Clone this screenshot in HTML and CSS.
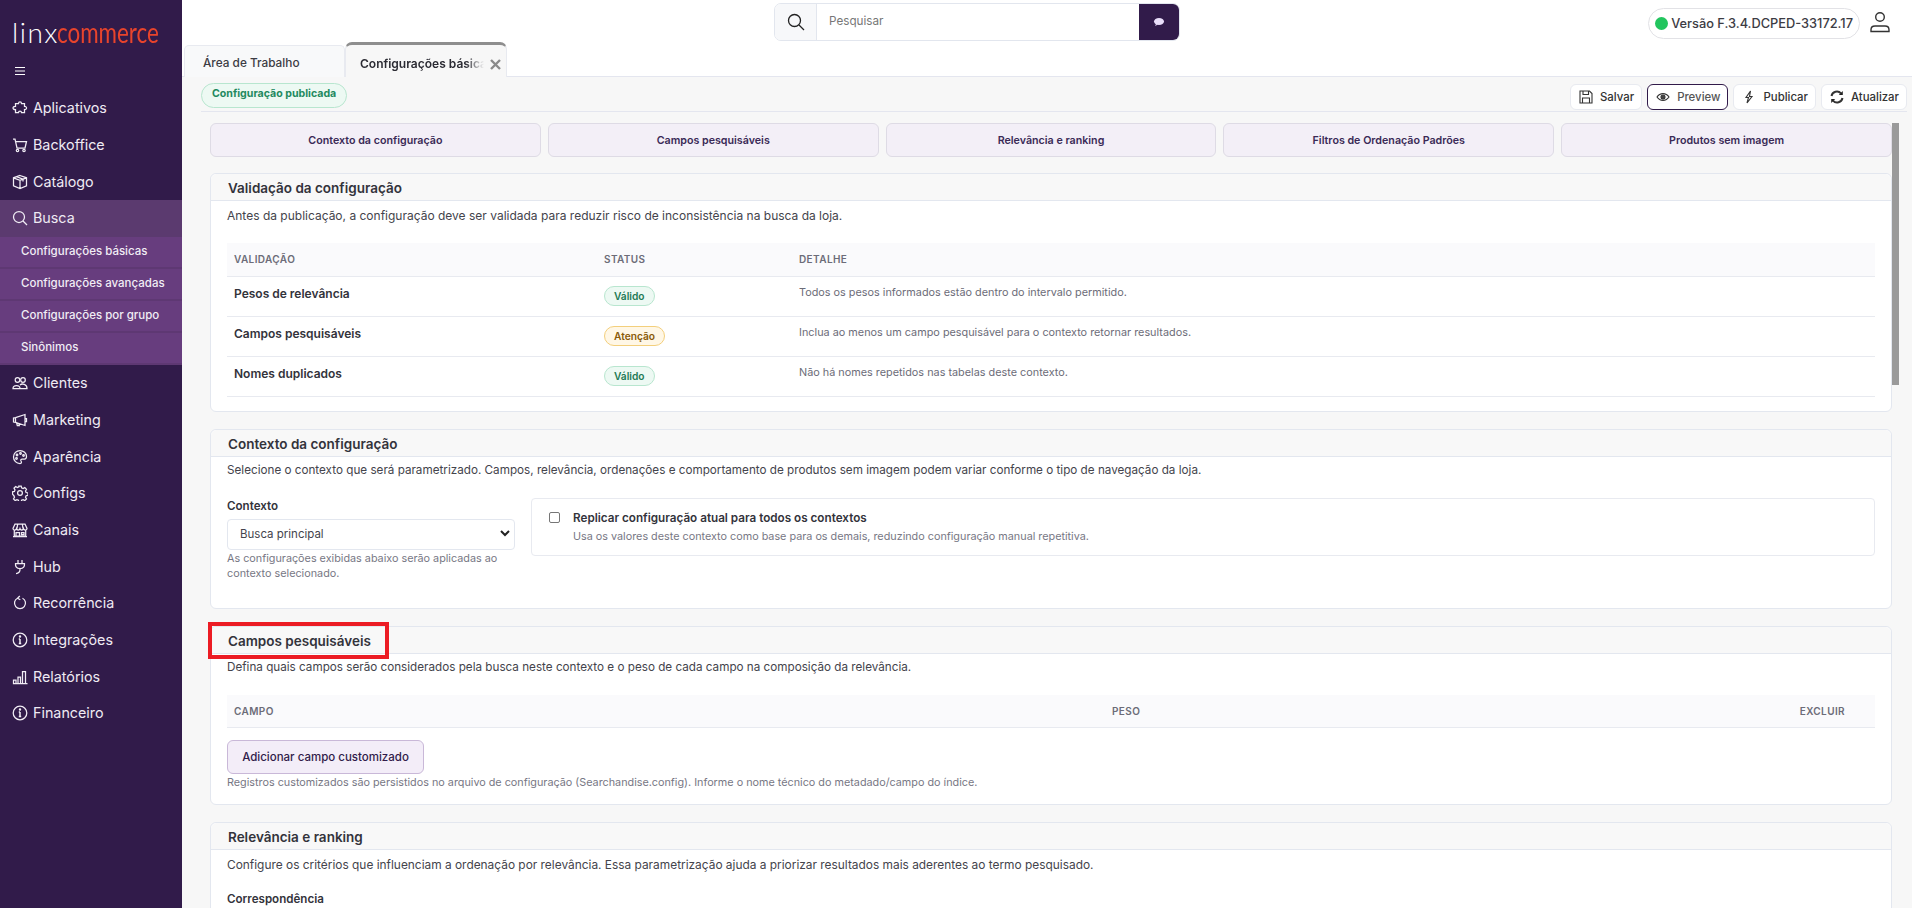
FILE: index.html
```html
<!DOCTYPE html>
<html lang="pt-BR">
<head>
<meta charset="utf-8">
<title>Linx Commerce</title>
<link rel="stylesheet" href="styles.css">
</head>
<body>
<div class="app">
  <aside class="sidebar">
    <div class="logo"><span class="logo-linx">linx</span><span class="logo-commerce">commerce</span></div>
    <div class="burger"><svg width="12" height="10" viewBox="0 0 12 10"><path d="M1 1.500h10M1 5h10M1 8.500h10" stroke="#fff" stroke-width="1.200" fill="none"/></svg></div>
    <nav>
      <a class="nav-item"><svg class="ico" viewBox="0 0 16 16"><path d="M3.500 3.500h3c0-2.300 3-2.300 3 0h3v3c2.700-.3 2.700 3.300 0 3v3h-3c0-2-3-2-3 0h-3v-3c-3.300.3-3.300-3.300 0-3z"/></svg>Aplicativos</a>
      <a class="nav-item"><svg class="ico" viewBox="0 0 16 16"><path d="M1 2h2l2 9h8l1.500-6.500H3.600"/><circle cx="5.500" cy="13.500" r="1.200"/><circle cx="12" cy="13.500" r="1.200"/></svg>Backoffice</a>
      <a class="nav-item"><svg class="ico" viewBox="0 0 16 16"><path d="M8 1.500l6.500 2.300v8L8 14.500l-6.500-2.700v-8zM1.500 3.800L8 6.300l6.500-2.500M8 6.300v8.200M4.500 2.700l6.500 2.400v2.500"/></svg>Catálogo</a>
      <a class="nav-item is-open"><svg class="ico" viewBox="0 0 16 16"><circle cx="7" cy="7" r="5.500"/><path d="M11 11l4 4"/></svg>Busca</a>
      <a class="sub-item">Configurações básicas</a>
      <a class="sub-item">Configurações avançadas</a>
      <a class="sub-item">Configurações por grupo</a>
      <a class="sub-item">Sinônimos</a>
      <a class="nav-item after-sub"><svg class="ico" viewBox="0 0 16 16"><circle cx="5.500" cy="5" r="2.300"/><circle cx="11" cy="5" r="2.300"/><path d="M1 13.500c0-4 7-4 7 0zM8 10c2-1.800 7-1.200 7 3.500H8"/></svg>Clientes</a>
      <a class="nav-item"><svg class="ico" viewBox="0 0 16 16"><path d="M1.500 6v4l2 .300L13 13.500v-11L3.500 5.700zM3.500 5.700v4.600M4.500 10.500l.8 3h2l-.6-2.300M13 6.500h1.500v3H13"/></svg>Marketing</a>
      <a class="nav-item"><svg class="ico" viewBox="0 0 16 16"><path d="M8 1.500a6.500 6.500 0 1 0 0 13c2 0 1.500-1.800 1-2.500-.6-1 0-2 1.200-2h2.300c1.500 0 2-1.200 2-2.500 0-3.500-2.900-6-6.500-6z"/><circle cx="5" cy="6" r=".8"/><circle cx="8.500" cy="4.500" r=".8"/><circle cx="4.500" cy="9.500" r=".8"/><circle cx="11.500" cy="6.500" r=".8"/></svg>Aparência</a>
      <a class="nav-item"><svg class="ico" viewBox="0 0 16 16"><circle cx="8" cy="8" r="2.400"/><path d="M6.800 1h2.400l.4 1.900 1.500.7 1.700-1 1.700 1.700-1 1.700.6 1.500 1.900.4v2.400l-1.900.4-.6 1.500 1 1.700-1.700 1.700-1.700-1-1.500.6-.4 1.900H6.800l-.4-1.900-1.500-.6-1.700 1-1.700-1.700 1-1.700-.6-1.500L.5 9.200V6.800l1.900-.4.600-1.500-1-1.700 1.700-1.700 1.700 1 1.500-.6z"/></svg>Configs</a>
      <a class="nav-item"><svg class="ico" viewBox="0 0 16 16"><path d="M3 2h10l2 4.500c0 2-3 2-3.500.3-.5 1.700-3 1.700-3.500 0-.5 1.700-3 1.700-3.500 0C4 8.500 1 8.500 1 6.500zM2.300 8.500V14h11.400V8.500M1 14.500h14M4 14v-3.500h3.500V14M9.500 10.500H12v2H9.500zM5.700 2 5 6.500M10.300 2l.7 4.500"/></svg>Canais</a>
      <a class="nav-item"><svg class="ico" viewBox="0 0 16 16"><path d="M6 1v3.500M10 1v3.500M3.500 4.500h9c.3 3-1 5-4.500 5.200-3.500-.2-4.800-2.200-4.500-5.200zM8 9.700c.3 3-1.500 4.800-4 4.800"/></svg>Hub</a>
      <a class="nav-item"><svg class="ico" viewBox="0 0 16 16"><path d="M5.500 3.200a5.500 5.500 0 1 0 5 0M5.500 3.200L7.800 1M5.500 3.200l2.800 1.600"/></svg>Recorrência</a>
      <a class="nav-item"><svg class="ico" viewBox="0 0 16 16"><circle cx="8" cy="8" r="6.800"/><path d="M8 7v4.500M6.800 7H8M6.800 11.500h2.400" stroke-width="1.500"/><circle cx="8" cy="4.500" r=".6"/></svg>Integrações</a>
      <a class="nav-item"><svg class="ico" viewBox="0 0 16 16"><path d="M1 14.500h14.500M1.500 11h2.500v3.500H1.500zM6 8h2.500v6.500H6zM10.500 2.500h3v12h-3z"/></svg>Relatórios</a>
      <a class="nav-item"><svg class="ico" viewBox="0 0 16 16"><circle cx="8" cy="8" r="6.800"/><path d="M8 7v4.500M6.800 7H8M6.800 11.500h2.400" stroke-width="1.500"/><circle cx="8" cy="4.500" r=".6"/></svg>Financeiro</a>
    </nav>
  </aside>

  <div class="main">
    <header class="topbar">
      <div class="search">
        <span class="search-icon"><svg width="18" height="18" viewBox="0 0 18 18" fill="none" stroke="#222" stroke-width="1.300"><circle cx="7.500" cy="7.500" r="6"/><path d="M12 12l5 5"/></svg></span>
        <span class="search-input">Pesquisar</span>
        <span class="search-btn"><svg width="12" height="10" viewBox="0 0 12 10"><ellipse cx="6" cy="4.500" rx="5" ry="3.500" fill="#e9defa"/><path d="M3 7l-1 2 3-1.500z" fill="#e9defa"/></svg></span>
      </div>
      <div class="version"><span class="dot"></span>Versão F.3.4.DCPED-33172.17</div>
      <svg class="user" width="20" height="22" viewBox="0 0 20 22" fill="none" stroke="#333" stroke-width="1.400"><circle cx="10" cy="6" r="4.300"/><path d="M1 20.500v-1.800c0-2 1.500-3.700 4-3.700h10c2.500 0 4 1.700 4 3.700v1.800z"/></svg>
    </header>

    <div class="tabs">
      <div class="tab">Área de Trabalho</div>
      <div class="tab is-active"><span class="tab-label">Configurações básicas</span><svg class="tab-close" width="11" height="11" viewBox="0 0 11 11"><path d="M1 1l9 9M10 1l-9 9" stroke="#8a8a8a" stroke-width="2.400" fill="none"/></svg></div>
    </div>

    <div class="page">
      <div class="toolbar">
        <span class="status-pill">Configuração publicada</span>
        <div class="actions">
          <button class="act"><svg class="act-ico" viewBox="0 0 14 14"><path d="M1 1h9.500L13 3.500V13H1zM4 1v3.500h5.500V1M3.500 13V8h7v5"/></svg>Salvar</button>
          <button class="act act-preview"><svg class="act-ico" viewBox="0 0 14 14"><path d="M1 7c3-4.500 9-4.500 12 0-3 4.500-9 4.500-12 0z"/><circle cx="7" cy="7" r="2" fill="#444"/></svg>Preview</button>
          <button class="act"><svg class="act-ico" viewBox="0 0 14 14"><path d="M8.500 1L4 7.500h2.500L5 13l5-6.500H7.500z"/></svg>Publicar</button>
          <button class="act"><svg class="act-ico act-refresh" viewBox="0 0 14 14"><path d="M1.500 6A5.500 5.500 0 0 1 11 3.300M12.500 8A5.500 5.500 0 0 1 3 10.700"/><path class="solid" d="M12.800 1v4h-4zM1.200 13V9h4z"/></svg>Atualizar</button>
        </div>
      </div>

      <div class="scroll">
        <span class="thumb"></span>
        <div class="quick">
          <button class="quick-btn">Contexto da configuração</button>
          <button class="quick-btn">Campos pesquisáveis</button>
          <button class="quick-btn">Relevância e ranking</button>
          <button class="quick-btn">Filtros de Ordenação Padrões</button>
          <button class="quick-btn">Produtos sem imagem</button>
        </div>

        <section class="card card-val">
          <h2 class="card-head">Validação da configuração</h2>
          <div class="card-body">
            <p class="desc">Antes da publicação, a configuração deve ser validada para reduzir risco de inconsistência na busca da loja.</p>
            <table class="grid">
              <thead><tr><th class="c1">Validação</th><th class="c2">Status</th><th>Detalhe</th></tr></thead>
              <tbody>
                <tr><td class="name">Pesos de relevância</td><td><span class="pill ok">Válido</span></td><td class="detail">Todos os pesos informados estão dentro do intervalo permitido.</td></tr>
                <tr><td class="name">Campos pesquisáveis</td><td><span class="pill warn">Atenção</span></td><td class="detail">Inclua ao menos um campo pesquisável para o contexto retornar resultados.</td></tr>
                <tr><td class="name">Nomes duplicados</td><td><span class="pill ok">Válido</span></td><td class="detail">Não há nomes repetidos nas tabelas deste contexto.</td></tr>
              </tbody>
            </table>
          </div>
        </section>

        <section class="card card-ctx">
          <h2 class="card-head">Contexto da configuração</h2>
          <div class="card-body">
            <p class="desc">Selecione o contexto que será parametrizado. Campos, relevância, ordenações e comportamento de produtos sem imagem podem variar conforme o tipo de navegação da loja.</p>
            <div class="ctx-row">
              <div class="ctx-field">
                <label class="label">Contexto</label>
                <div class="select">Busca principal<svg width="10" height="7" viewBox="0 0 10 7" fill="none" stroke="#222" stroke-width="2"><path d="M1 1l4 4 4-4"/></svg></div>
                <p class="help">As configurações exibidas abaixo serão aplicadas ao contexto selecionado.</p>
              </div>
              <div class="ctx-box">
                <span class="check"></span>
                <div>
                  <div class="ctx-title">Replicar configuração atual para todos os contextos</div>
                  <div class="help">Usa os valores deste contexto como base para os demais, reduzindo configuração manual repetitiva.</div>
                </div>
              </div>
            </div>
          </div>
        </section>

        <section class="card card-fields">
          <h2 class="card-head">Campos pesquisáveis<span class="mark"></span></h2>
          <div class="card-body">
            <p class="desc">Defina quais campos serão considerados pela busca neste contexto e o peso de cada campo na composição da relevância.</p>
            <table class="grid grid-fields">
              <thead><tr><th class="f1">Campo</th><th>Peso</th><th class="f3">Excluir</th></tr></thead>
            </table>
            <button class="add">Adicionar campo customizado</button>
            <p class="help">Registros customizados são persistidos no arquivo de configuração (Searchandise.config). Informe o nome técnico do metadado/campo do índice.</p>
          </div>
        </section>

        <section class="card card-rel">
          <h2 class="card-head">Relevância e ranking</h2>
          <div class="card-body">
            <p class="desc">Configure os critérios que influenciam a ordenação por relevância. Essa parametrização ajuda a priorizar resultados mais aderentes ao termo pesquisado.</p>
            <div class="label label-corr">Correspondência</div>
          </div>
        </section>
      </div>
    </div>
  </div>
</div>
</body>
</html>
```
FILE: styles.css
```css
* { box-sizing: border-box; }
html, body { margin: 0; height: 100%; overflow: hidden; }
body { font-family: Inter, "Liberation Sans", sans-serif; color: #2b2b33; background: #fff; }
p, h2 { margin: 0; }
button { font-family: inherit; cursor: pointer; }

.app { display: flex; height: 908px; }

/* Sidebar */
.sidebar { width: 182px; flex: none; background: #311b4a; color: #f1edf5; }
.logo { display: flex; align-items: baseline; height: 62px; padding: 14px 0 0 12px; font-family: Lato, sans-serif; font-weight: 400; font-size: 28px; line-height: 36px; white-space: nowrap; }
.logo-linx { width: 45px; color: #fff; font-weight: 300; letter-spacing: 1.500px; }
.logo-commerce { display: inline-block; color: #e8442c; transform: scaleX(.8); transform-origin: left center; }
.burger { height: 18px; padding-left: 14px; display: flex; align-items: center; margin-bottom: 10px; }
.nav-item { display: flex; align-items: center; gap: 5px; height: 36.650px; padding-left: 12px; font-size: 14.300px; line-height: 20px; color: #efeaf3; }
.nav-item.is-open { background: #5b3a6f; }
.nav-item.after-sub { margin-top: .5px; }
.ico { width: 16px; height: 16px; flex: none; fill: none; stroke: #f1edf5; stroke-width: 1.250; }
.sub-item { display: flex; align-items: center; height: 32px; padding: 0 0 1px 21px; font-size: 11.500px; font-weight: 500; color: #f1edf5; background: #673d7e; border-bottom: 2px solid #5e3873; }

/* Top bar */
.main { flex: 1; min-width: 0; display: flex; flex-direction: column; }
.topbar { height: 45px; flex: none; display: flex; align-items: flex-start; padding: 3px 22px 0 592px; }
.search { display: flex; width: 406px; height: 38px; border: 1px solid #e2e6ee; border-radius: 7px; overflow: hidden; }
.search-icon { width: 42px; display: flex; align-items: center; justify-content: center; background: #f7f8fa; border-right: 1px solid #e2e6ee; }
.search-input { flex: 1; display: flex; align-items: center; padding-left: 12px; font-size: 11.700px; color: #777; padding-bottom: 2px; }
.search-btn { width: 40px; display: flex; align-items: center; justify-content: center; background: #311b4a; }
.version { display: flex; align-items: center; gap: 3px; height: 31px; margin: 5px 0 0 auto; padding: 0 6px 0 6px; border: 1px solid #e2e2e6; border-radius: 16px; font-size: 12.800px; font-weight: 500; color: #3c3c44; }
.dot { width: 13px; height: 13px; border-radius: 50%; background: #22c55e; }
.user { margin: 8px 0 0 10px; }

/* Tabs */
.tabs { display: flex; height: 32px; flex: none; padding-left: 2px; border-bottom: 1px solid #e4e6ef; background: #fff; }
.tab { width: 161px; height: 32px; padding: 10px 0 0 18px; background: #f8f9fa; border: 1px solid #e8eaf0; border-bottom: 0; border-radius: 5px 5px 0 0; font-size: 11.800px; font-weight: 500; color: #3c3c44; }
.tab.is-active { position: relative; display: flex; width: 162px; height: 35px; margin-top: -3px; padding: 11px 0 0 14px; background: #f7f7f7; border-top: 3px solid #8e8e8e; border-radius: 7px 7px 0 0; font-size: 12px; font-weight: 600; color: #2b2b33; }
.tab-label { display: block; width: 124px; overflow: hidden; white-space: nowrap; -webkit-mask-image: linear-gradient(90deg, #000 85%, transparent 100%); mask-image: linear-gradient(90deg, #000 85%, transparent 100%); }
.tab-close { position: absolute; right: 5px; top: 14px; }

/* Page */
.page { flex: 1; min-height: 0; display: flex; flex-direction: column; padding: 0 5px 0 19px; background: #f7f7f7; }
.toolbar { height: 35px; flex: none; display: flex; align-items: flex-start; justify-content: space-between; border-bottom: 1px solid #e4e6ef; padding-top: 6px; }
.status-pill { height: 25px; padding: 3px 10px 0; font-size: 10.600px; font-weight: 700; color: #1f8a5f; background: #edf9f3; border: 1px solid #b8e6cf; border-radius: 13px; }
.actions { display: flex; gap: 5px; margin-top: 1px; }
.act { display: flex; align-items: center; gap: 7px; height: 26px; padding: 0 7px 0 8px; background: #fff; border: 1px solid #e8eaf0; border-radius: 6px; font-size: 11.400px; font-weight: 500; color: #333; }
.act-preview { border-color: #311b4a; color: #555; }
.act-ico { width: 14px; height: 14px; fill: none; stroke: #333; stroke-width: 1.100; }
.act-refresh { stroke-width: 2; }
.act-refresh .solid { fill: #222; stroke: none; }

/* Scrolling area */
.scroll { position: relative; flex: 1; min-height: 0; overflow: hidden; padding: 11px 15px 0 9px; }
.thumb { position: absolute; right: 8px; top: 11px; width: 7px; height: 262px; background: #9a9a9a; }
.quick { display: grid; grid-template-columns: repeat(5, 1fr); gap: 7px; margin-bottom: 16px; }
.quick-btn { height: 34px; background: #f3eff7; border: 1px solid #dedbe5; border-radius: 6px; font-size: 10.700px; font-weight: 600; color: #3a2a56; }

.card { background: #fff; border: 1px solid #e3e7ef; border-radius: 6px; margin-bottom: 17px; }
.card-head { position: relative; height: 27px; padding: 1px 17px 0; background: #f8f8f8; border-bottom: 1px solid #e3e7ef; border-radius: 6px 6px 0 0; font-size: 13.500px; line-height: 26px; font-weight: 600; color: #33333b; }
.card-body { padding: 6px 16px 16px; }
.card-ctx .card-body, .card-fields .card-body { padding-top: 5px; }
.desc { font-size: 12px; line-height: 17px; color: #44444c; }
.card-ctx .desc, .card-fields .desc { font-size: 11.700px; }
.card-rel .desc { font-size: 11.900px; }
.card-val { height: 239px; }
.card-ctx { height: 180px; }
.card-fields { height: 179px; }

.grid { width: 100%; margin-top: 19px; border-collapse: collapse; table-layout: fixed; }
.grid th { height: 33px; padding: 0 7px; background: #fafafc; border-bottom: 1px solid #e8eaf0; text-align: left; font-size: 10px; font-weight: 600; letter-spacing: .4px; text-transform: uppercase; color: #6c6c78; }
.grid td { height: 40px; padding: 9px 7px 0; border-bottom: 1px solid #e8eaf0; vertical-align: top; }
.c1 { width: 370px; }
.c2 { width: 195px; }
.name { font-size: 12px; font-weight: 600; color: #33333b; }
.grid .detail { padding-top: 8px; font-size: 10.850px; color: #6c6c78; }
.pill { display: block; width: fit-content; height: 20px; padding: 0 9px; border-radius: 10px; border: 1px solid; font-size: 10.200px; line-height: 19px; font-weight: 600; }
.ok { color: #1f7a55; background: #edf9f3; border-color: #b8e6cf; }
.warn { color: #8a5a08; background: #fff7e6; border-color: #f3cf7c; }

.ctx-row { display: flex; gap: 16px; margin-top: 18px; }
.ctx-field { width: 288px; flex: none; padding-top: 1px; }
.label { display: block; font-size: 11.600px; font-weight: 600; line-height: 17px; color: #33333b; }
.select { display: flex; align-items: center; justify-content: space-between; height: 31px; margin-top: 4px; padding: 0 4px 2px 12px; border: 1px solid #e3e7ef; border-radius: 4px; font-size: 11.500px; color: #44444c; }
.help { font-size: 10.800px; line-height: 15px; color: #777784; margin-top: 2px; }
.select + .help { margin-top: 1px; }
.ctx-box { flex: 1; display: flex; gap: 13px; height: 58px; margin-top: 1px; padding: 11px 17px; border: 1px solid #e8eaf0; border-radius: 4px; }
.check { width: 11px; height: 11px; margin-top: 2px; flex: none; border: 1px solid #767676; border-radius: 2px; background: #fff; }
.ctx-title { font-size: 11.700px; font-weight: 600; line-height: 17px; color: #33333b; }

.mark { position: absolute; left: -3px; top: -5px; width: 181px; height: 37px; border: 4.500px solid #ec1c24; }
.grid-fields th { height: 32px; }
.f1 { width: 878px; }
.f3 { width: 105px; text-align: right !important; padding-right: 30px !important; }
.add { display: block; width: 197px; height: 34px; margin-top: 12px; background: #f3edf8; border: 1px solid #c9b8d8; border-radius: 6px; font-size: 11.500px; font-weight: 500; color: #311b4a; }
.add + .help { margin-top: 1px; }
.label-corr { margin-top: 18px; }
```
